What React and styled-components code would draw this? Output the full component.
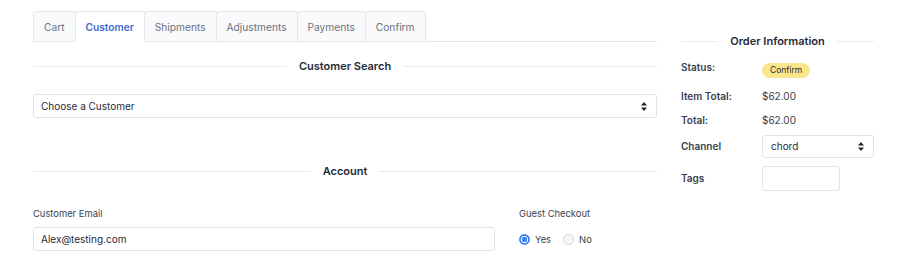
import React from "react";
import styled, { createGlobalStyle } from "styled-components";

const Global = createGlobalStyle`
  html, body { margin: 0; padding: 0; background: #fff; }
  body { font-family: Inter, "Noto Sans", Arial, sans-serif; color: #374151; -webkit-font-smoothing: antialiased; }
  * { box-sizing: border-box; }
`;

const Page = styled.div`
  display: flex;
  align-items: flex-start;
  gap: 24px;
  padding-left: 33px;
  width: 900px;
`;

const Main = styled.div`
  width: 624px;
  display: flex;
  flex-direction: column;
`;

const Side = styled.aside`
  width: 193px;
  display: flex;
  flex-direction: column;
`;

const TabBar = styled.div`
  display: flex;
  margin-top: 11px;
  height: 31px;
  border-bottom: 1px solid #e5e7eb;
`;

const Tab = styled.div`
  height: 31px;
  padding: 0 10px;
  display: flex;
  align-items: center;
  font-size: 10.2px;
  font-weight: ${(p) => (p.$active ? 600 : 400)};
  color: ${(p) => (p.$active ? "#3e6ccd" : "#6b7280")};
  background: ${(p) => (p.$active ? "#fff" : "#f9fafb")};
  border: 1px solid #e5e7eb;
  border-bottom: ${(p) => (p.$active ? "1px solid #fff" : "1px solid #e5e7eb")};
  border-radius: 3px 3px 0 0;
  margin-right: -1px;
  position: relative;
  z-index: ${(p) => (p.$active ? 1 : 0)};
`;

const Heading = styled.div`
  display: flex;
  align-items: center;
  gap: 12px;
  height: 16px;
  margin-top: ${(p) => p.$mt || 0}px;
  font-size: 11px;
  font-weight: 600;
  color: #1f2937;
  white-space: nowrap;
  &::before, &::after {
    content: "";
    flex: 1;
    height: 1px;
    background: #e9ebee;
  }
`;

const SelectBox = styled.div`
  margin-top: ${(p) => p.$mt || 0}px;
  width: 100%;
  height: ${(p) => p.$h || 24}px;
  border: 1px solid #dfe2e6;
  border-radius: 3px;
  background: #fff;
  display: flex;
  align-items: center;
  justify-content: space-between;
  padding: 0 9px 0 ${(p) => p.$pl || 7}px;
  font-size: 10px;
  color: #1f2937;
`;

const SortIcon = () => (
  <svg width="6" height="9" viewBox="0 0 6 9">
    <polygon points="3,0 6,3.5 0,3.5" fill="#222" />
    <polygon points="0,5.5 6,5.5 3,9" fill="#222" />
  </svg>
);

const FieldRow = styled.div`
  display: flex;
  gap: 24px;
  margin-top: 28px;
`;

const Field = styled.div`
  display: flex;
  flex-direction: column;
  gap: 6px;
  ${(p) => (p.$grow ? "flex: 1;" : `width: ${p.$w}px;`)}
`;

const Label = styled.div`
  font-size: 9.4px;
  line-height: 14px;
  color: #374151;
`;

const TextInput = styled.div`
  height: 24px;
  border: 1px solid #dfe2e6;
  border-radius: 3px;
  display: flex;
  align-items: center;
  padding: 0 7px;
  font-size: 10px;
  color: #1f2937;
`;

const RadioGroup = styled.div`
  display: flex;
  align-items: center;
  height: 24px;
  gap: 12px;
`;

const RadioOption = styled.label`
  display: flex;
  align-items: center;
  gap: 5px;
  font-size: 9.4px;
  color: #374151;
`;

const RadioDot = styled.span`
  width: 11px;
  height: 11px;
  border-radius: 50%;
  border: 1px solid ${(p) => (p.$on ? "#3b82f6" : "#d4d7dc")};
  background: ${(p) =>
    p.$on
      ? "radial-gradient(circle, #3b82f6 0 2.6px, #fff 3px 3.4px, #3b82f6 3.8px)"
      : "#f5f6f7"};
`;

const InfoRow = styled.div`
  display: grid;
  grid-template-columns: 81px 1fr;
  align-items: center;
  min-height: 16px;
  margin-top: ${(p) => p.$mt || 0}px;
`;

const InfoLabel = styled.div`
  font-size: 10px;
  font-weight: 600;
  color: #374151;
`;

const InfoValue = styled.div`
  font-size: 10px;
  color: #374151;
`;

const Badge = styled.span`
  display: inline-flex;
  align-items: center;
  height: 15px;
  padding: 0 8px;
  border-radius: 999px;
  background: #fae68a;
  color: #1f2937;
  font-size: 8.5px;
`;

const TagsInput = styled.div`
  width: 78px;
  height: 25px;
  border: 1px solid #dfe2e6;
  border-radius: 3px;
`;

export default function App() {
  const tabs = [
    ["Cart", false],
    ["Customer", true],
    ["Shipments", false],
    ["Adjustments", false],
    ["Payments", false],
    ["Confirm", false],
  ];
  return (
    <>
      <Global />
      <Page>
        <Main>
          <TabBar>
            {tabs.map(([t, a]) => (
              <Tab key={t} $active={a}>
                {t}
              </Tab>
            ))}
          </TabBar>
          <Heading $mt={16}>Customer Search</Heading>
          <SelectBox $mt={20}>
            <span>Choose a Customer</span>
            <SortIcon />
          </SelectBox>
          <Heading $mt={45}>Account</Heading>
          <FieldRow>
            <Field $grow>
              <Label>Customer Email</Label>
              <TextInput>Alex@testing.com</TextInput>
            </Field>
            <Field $w={138}>
              <Label>Guest Checkout</Label>
              <RadioGroup>
                <RadioOption>
                  <RadioDot $on />
                  Yes
                </RadioOption>
                <RadioOption>
                  <RadioDot />
                  No
                </RadioOption>
              </RadioGroup>
            </Field>
          </FieldRow>
        </Main>
        <Side>
          <Heading $mt={33}>Order Information</Heading>
          <InfoRow $mt={8}>
            <InfoLabel>Status:</InfoLabel>
            <div>
              <Badge>Confirm</Badge>
            </div>
          </InfoRow>
          <InfoRow $mt={10}>
            <InfoLabel>Item Total:</InfoLabel>
            <InfoValue>$62.00</InfoValue>
          </InfoRow>
          <InfoRow $mt={8}>
            <InfoLabel>Total:</InfoLabel>
            <InfoValue>$62.00</InfoValue>
          </InfoRow>
          <InfoRow $mt={7}>
            <InfoLabel>Channel</InfoLabel>
            <SelectBox $h={23} $pl={8}>
              <span>chord</span>
              <SortIcon />
            </SelectBox>
          </InfoRow>
          <InfoRow $mt={8}>
            <InfoLabel>Tags</InfoLabel>
            <TagsInput />
          </InfoRow>
        </Side>
      </Page>
    </>
  );
}
